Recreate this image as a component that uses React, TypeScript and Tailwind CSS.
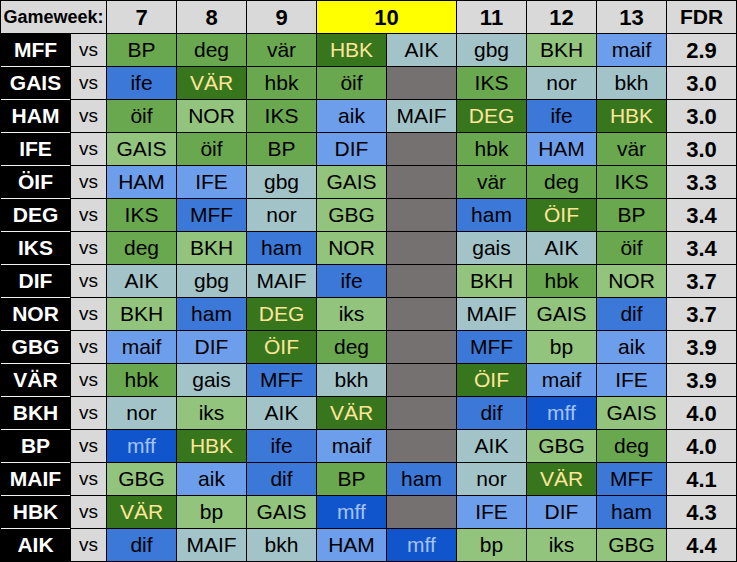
import React from "react";

const STY: Record<string, string> = {
  D: "bg-[#38761d] text-[#ffe599]",
  M: "bg-[#6aa84f] text-black",
  L: "bg-[#93c47d] text-black",
  C: "bg-[#a2c4c9] text-black",
  B1: "bg-[#6d9eeb] text-black",
  B2: "bg-[#3c78d8] text-black",
  B3: "bg-[#1155cc] text-[#a4c2f4]",
  G: "bg-[#767171]",
};

type Row = { team: string; cells: string[]; fdr: string };

const rows: Row[] = [
  { team: "MFF", cells: ["BP:M", "deg:M", "vär:M", "HBK:D", "AIK:C", "gbg:C", "BKH:L", "maif:B1"], fdr: "2.9" },
  { team: "GAIS", cells: ["ife:B2", "VÄR:D", "hbk:M", "öif:M", ":G", "IKS:M", "nor:C", "bkh:C"], fdr: "3.0" },
  { team: "HAM", cells: ["öif:M", "NOR:L", "IKS:M", "aik:B1", "MAIF:C", "DEG:D", "ife:B2", "HBK:D"], fdr: "3.0" },
  { team: "IFE", cells: ["GAIS:L", "öif:M", "BP:M", "DIF:B1", ":G", "hbk:M", "HAM:B1", "vär:M"], fdr: "3.0" },
  { team: "ÖIF", cells: ["HAM:B1", "IFE:B1", "gbg:C", "GAIS:L", ":G", "vär:M", "deg:M", "IKS:M"], fdr: "3.3" },
  { team: "DEG", cells: ["IKS:M", "MFF:B2", "nor:C", "GBG:L", ":G", "ham:B2", "ÖIF:D", "BP:M"], fdr: "3.4" },
  { team: "IKS", cells: ["deg:M", "BKH:L", "ham:B2", "NOR:L", ":G", "gais:C", "AIK:C", "öif:M"], fdr: "3.4" },
  { team: "DIF", cells: ["AIK:C", "gbg:C", "MAIF:C", "ife:B2", ":G", "BKH:L", "hbk:M", "NOR:L"], fdr: "3.7" },
  { team: "NOR", cells: ["BKH:L", "ham:B2", "DEG:D", "iks:L", ":G", "MAIF:C", "GAIS:L", "dif:B2"], fdr: "3.7" },
  { team: "GBG", cells: ["maif:B1", "DIF:B1", "ÖIF:D", "deg:M", ":G", "MFF:B2", "bp:L", "aik:B1"], fdr: "3.9" },
  { team: "VÄR", cells: ["hbk:M", "gais:C", "MFF:B2", "bkh:C", ":G", "ÖIF:D", "maif:B1", "IFE:B1"], fdr: "3.9" },
  { team: "BKH", cells: ["nor:C", "iks:L", "AIK:C", "VÄR:D", ":G", "dif:B2", "mff:B3", "GAIS:L"], fdr: "4.0" },
  { team: "BP", cells: ["mff:B3", "HBK:D", "ife:B2", "maif:B1", ":G", "AIK:C", "GBG:L", "deg:M"], fdr: "4.0" },
  { team: "MAIF", cells: ["GBG:L", "aik:B1", "dif:B2", "BP:M", "ham:B2", "nor:C", "VÄR:D", "MFF:B2"], fdr: "4.1" },
  { team: "HBK", cells: ["VÄR:D", "bp:L", "GAIS:L", "mff:B3", ":G", "IFE:B1", "DIF:B1", "ham:B2"], fdr: "4.3" },
  { team: "AIK", cells: ["dif:B2", "MAIF:C", "bkh:C", "HAM:B1", "mff:B3", "bp:L", "iks:L", "GBG:L"], fdr: "4.4" },
];

const center = "flex items-center justify-center";

export default function App() {
  return (
    <div
      className="w-[737px] h-[562px] bg-black p-px grid grid-cols-[69px_35px_repeat(9,69px)] grid-rows-[repeat(17,32px)] gap-px"
      style={{ fontFamily: '"Liberation Sans", Arial, sans-serif' }}
    >
      <div className={`${center} col-span-2 bg-[#d9d9d9] text-black font-bold text-[18px]`}>Gameweek:</div>
      {["7", "8", "9"].map((n) => (
        <div key={n} className={`${center} bg-[#d9d9d9] text-black font-bold text-[22px]`}>{n}</div>
      ))}
      <div className={`${center} col-span-2 bg-[#ffff00] text-black font-bold text-[22px]`}>10</div>
      {["11", "12", "13"].map((n) => (
        <div key={n} className={`${center} bg-[#d9d9d9] text-black font-bold text-[22px]`}>{n}</div>
      ))}
      <div className={`${center} bg-[#d9d9d9] text-black font-bold text-[21px]`}>FDR</div>

      {rows.map((r, ri) => (
        <React.Fragment key={r.team}>
          <div
            className={`${center} bg-black text-white font-bold text-[21px] ${
              ri < rows.length - 1 ? "border-b border-[#f2f2f2] -mb-px" : ""
            }`}
          >
            {r.team}
          </div>
          <div className={`${center} bg-[#d9d9d9] text-black text-[19px]`}>vs</div>
          {r.cells.map((c, ci) => {
            const [txt, k] = c.split(":");
            return (
              <div key={ci} className={`${center} ${STY[k]} text-[21px]`}>
                {txt}
              </div>
            );
          })}
          <div className={`${center} bg-[#d9d9d9] text-black font-bold text-[22px]`}>{r.fdr}</div>
        </React.Fragment>
      ))}
    </div>
  );
}
